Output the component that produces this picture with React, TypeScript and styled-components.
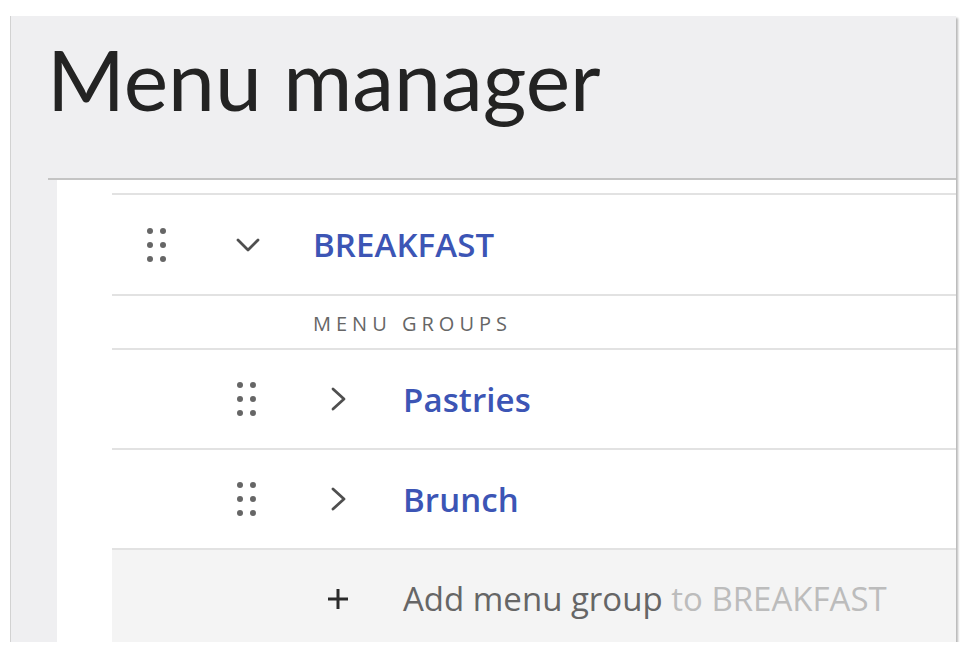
import React from "react";
import styled, { createGlobalStyle } from "styled-components";

const Global = createGlobalStyle`
  html, body { margin: 0; padding: 0; background: #ffffff; }
  body { font-family: "Open Sans", "Liberation Sans", sans-serif; }
`;

const Frame = styled.div`
  margin: 16px 0 0 10px;
  width: 946px;
  height: 626px;
  box-sizing: border-box;
  border-left: 1px solid #d2d2d2;
  background: #efeff1;
  box-shadow: 2px 2px 2px rgba(0, 0, 0, 0.28);
  overflow: hidden;
  display: flex;
  flex-direction: column;
`;

const Header = styled.header`
  flex-shrink: 0;
  height: 162px;
  box-sizing: border-box;
  padding: 13px 0 0 36px;
`;

const Title = styled.h1`
  margin: 0;
  font-family: Lato, "Open Sans", sans-serif;
  font-weight: 400;
  font-size: 84px;
  line-height: 100px;
  color: #232323;
  letter-spacing: 0;
`;

const Divider = styled.div`
  flex-shrink: 0;
  margin-left: 37px;
  height: 2px;
  background: #c4c4c4;
`;

const Body = styled.div`
  flex: 1;
  min-height: 0;
  display: flex;
  padding-left: 46px;
`;

const Panel = styled.main`
  flex: 1;
  background: #ffffff;
  padding: 13px 0 0 55px;
`;

const List = styled.div`
  border-top: 2px solid #e2e2e2;
  display: flex;
  flex-direction: column;
`;

const Row = styled.div<{ $level: number; $height: number; $muted?: boolean }>`
  flex-shrink: 0;
  display: flex;
  align-items: center;
  box-sizing: border-box;
  height: ${(p) => p.$height}px;
  padding-left: ${(p) => 12 + p.$level * 90}px;
  border-bottom: 2px solid #e2e2e2;
  background: ${(p) => (p.$muted ? "#f4f4f4" : "#ffffff")};
`;

const HandleCell = styled.div`
  width: 65px;
  display: flex;
  justify-content: center;
  align-items: center;
`;

const ToggleCell = styled.div`
  width: 60px;
  margin-left: 29px;
  display: flex;
  justify-content: center;
  align-items: center;
`;

const Label = styled.span`
  margin-left: 35px;
  font-weight: 600;
  font-size: 33px;
  color: #3c55b5;
  letter-spacing: 0.1px;
`;

const SectionLabel = styled.span`
  margin-left: 189px;
  font-size: 20px;
  letter-spacing: 5px;
  color: #666666;
  padding-top: 2px;
`;

const AddText = styled.span`
  margin-left: 35px;
  font-size: 33px;
  color: #666666;
  padding-bottom: 2px;
`;

const AddTarget = styled.span`
  color: #bcbcbc;
`;

const DragHandle = () => (
  <svg width="19" height="34" viewBox="0 0 19 34">
    {[3, 17, 31].map((cy) =>
      [3, 16].map((cx) => <circle key={`${cx}-${cy}`} cx={cx} cy={cy} r="3" fill="#666" />)
    )}
  </svg>
);

const ChevronDown = () => (
  <svg width="24" height="14" viewBox="0 0 24 14">
    <polyline points="2,2 12,12 22,2" fill="none" stroke="#4f4f4f" strokeWidth="2.8" strokeLinecap="round" strokeLinejoin="round" />
  </svg>
);

const ChevronRight = () => (
  <svg width="16" height="24" viewBox="0 0 16 24">
    <polyline points="3,2 14,12 3,22" fill="none" stroke="#4f4f4f" strokeWidth="2.8" strokeLinecap="round" strokeLinejoin="round" />
  </svg>
);

const Plus = () => (
  <svg width="22" height="22" viewBox="0 0 22 22">
    <path d="M11 1 V21 M1 11 H21" stroke="#2a2a2a" strokeWidth="3" />
  </svg>
);

const groups = ["Pastries", "Brunch"];

export default function App() {
  return (
    <>
      <Global />
      <Frame>
        <Header>
          <Title>Menu manager</Title>
        </Header>
        <Divider />
        <Body>
          <Panel>
            <List>
              <Row $level={0} $height={101}>
                <HandleCell>
                  <DragHandle />
                </HandleCell>
                <ToggleCell>
                  <ChevronDown />
                </ToggleCell>
                <Label>BREAKFAST</Label>
              </Row>
              <Row $level={0} $height={54}>
                <SectionLabel>MENU GROUPS</SectionLabel>
              </Row>
              {groups.map((g) => (
                <Row key={g} $level={1} $height={100}>
                  <HandleCell>
                    <DragHandle />
                  </HandleCell>
                  <ToggleCell>
                    <ChevronRight />
                  </ToggleCell>
                  <Label>{g}</Label>
                </Row>
              ))}
              <Row $level={1} $height={100} $muted>
                <HandleCell />
                <ToggleCell>
                  <Plus />
                </ToggleCell>
                <AddText>
                  Add menu group <AddTarget>to BREAKFAST</AddTarget>
                </AddText>
              </Row>
            </List>
          </Panel>
        </Body>
      </Frame>
    </>
  );
}
